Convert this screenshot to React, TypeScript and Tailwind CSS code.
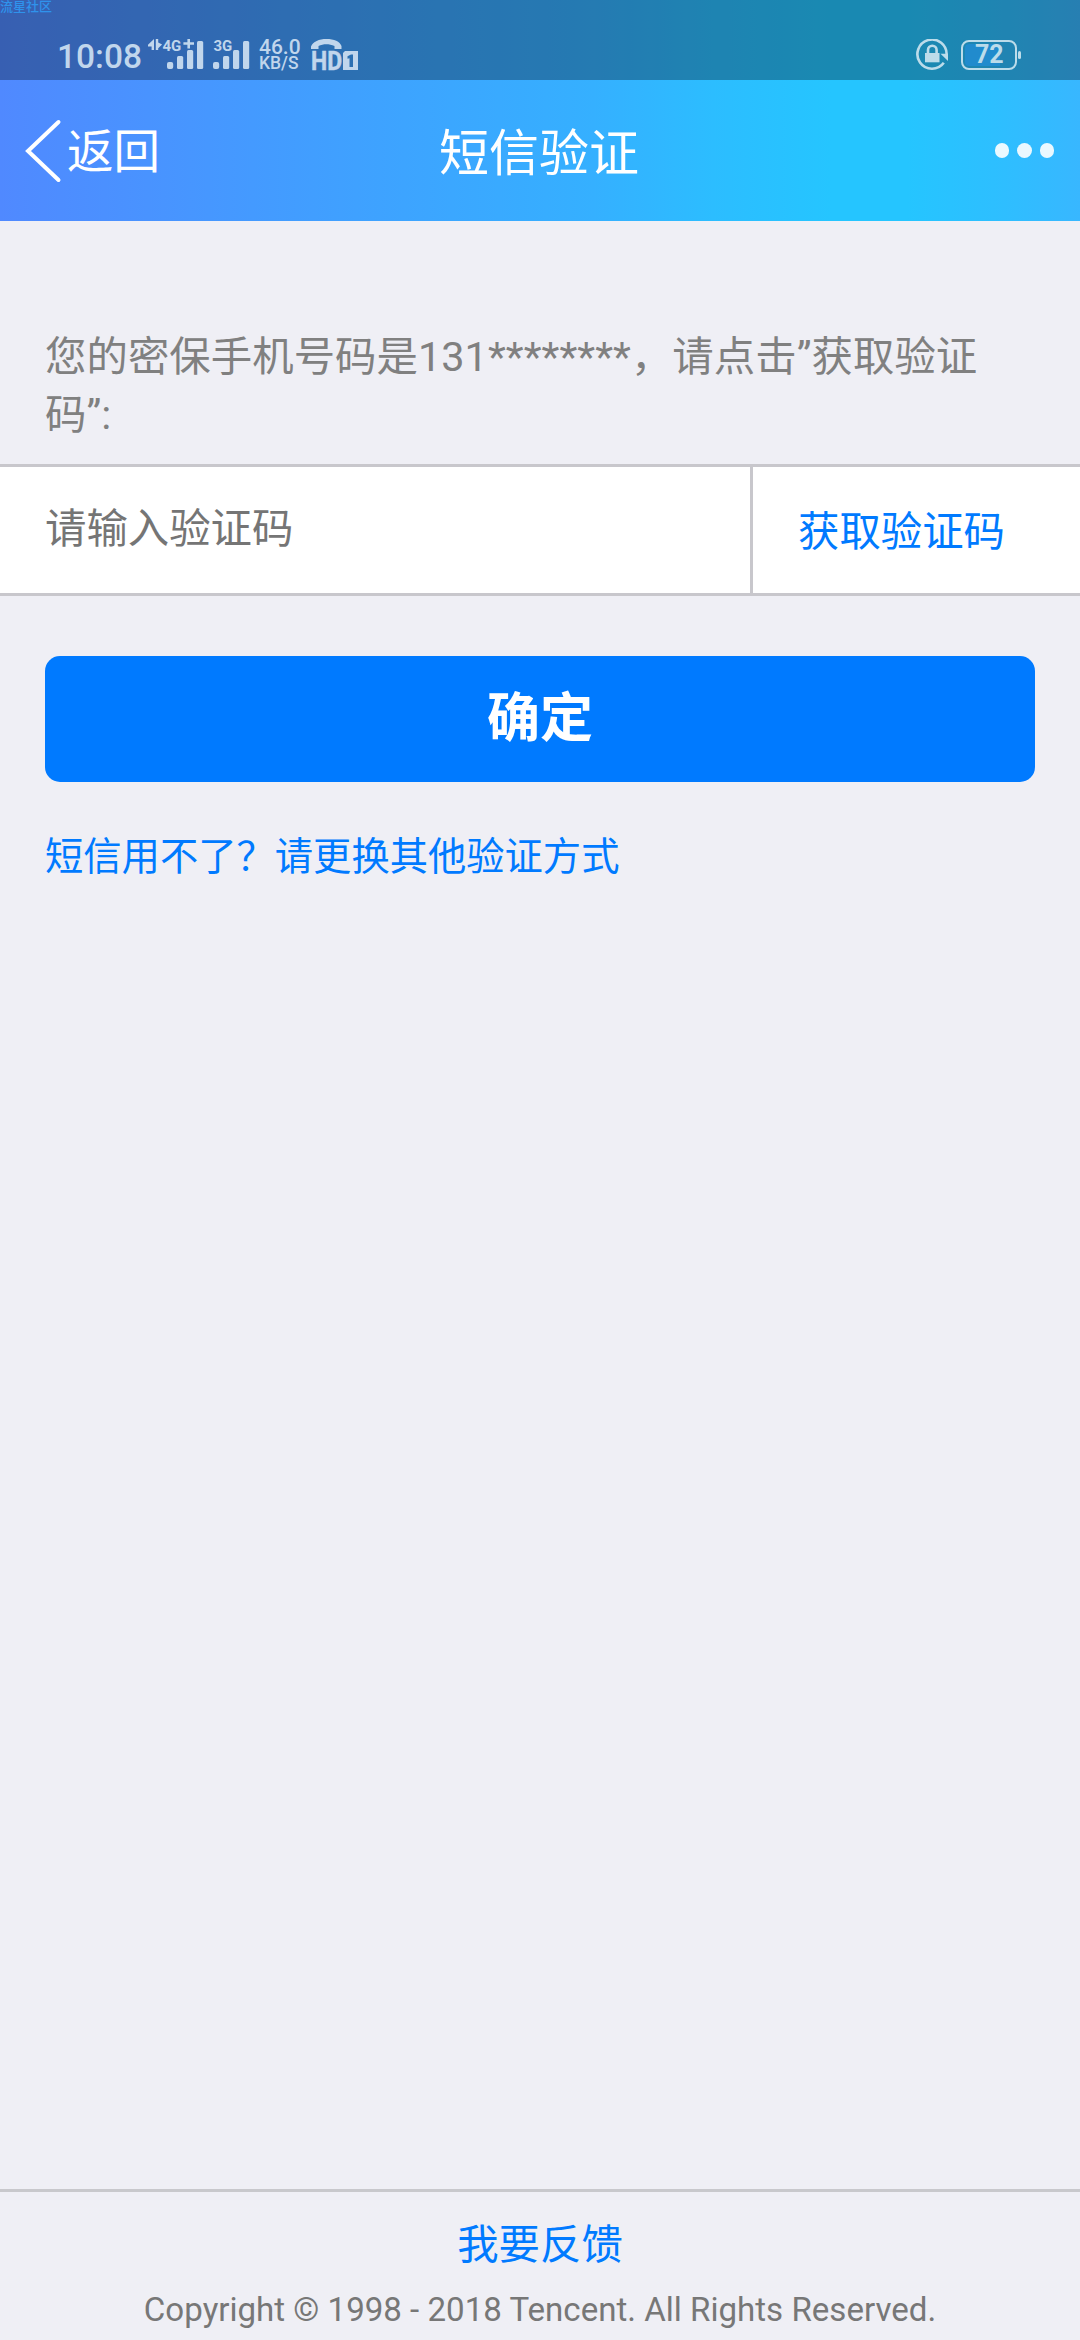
function SignalBars({ label, data }: { label: string; data?: boolean }) {
  return (
    <svg
      className={data ? "h-8 w-14 overflow-visible" : "h-8 w-9 overflow-visible"}
      viewBox={data ? "0 0 56 32" : "19 0 36 32"}
      fill="currentColor"
    >
      {data && (
        <>
          <path d="M6 0v11H3.600V7.400H0V5.800z" />
          <path d="M7.800 0v11h2.400V9.300l3.900-3.900-3.900-2V0z" />
        </>
      )}
      <text
        x={data ? 14.5 : 19.5}
        y="12"
        fontSize="15"
        fontWeight="700"
        fontFamily="Roboto, sans-serif"
      >
        {label}
      </text>
      {data && <path d="M39.400 0H42v3.300h4v2.500h-4V9.400h-2.600V5.800h-4V3.300h4z" />}
      <rect x="19" y="23" width="6.200" height="7" rx="2" />
      <rect x="29" y="17" width="6.200" height="13" rx="1.500" />
      <rect x="39" y="11" width="6.200" height="19" rx="1.500" />
      <rect x="49" y="2" width="6.200" height="28" rx="1.500" />
    </svg>
  );
}

function HdCallIcon() {
  return (
    <svg className="h-8 w-12 overflow-visible" viewBox="0 0 48 32" fill="currentColor">
      <path d="M0 10V7.500C2 2.500 8 0 15.500 0S29 2.500 30.500 7v3h-7V7C18 4.500 12.500 4.500 7.500 7v3z" />
      <text
        x="0"
        y="31"
        fontSize="25.500"
        fontWeight="700"
        fontFamily="Roboto, sans-serif"
        textLength="31"
        lengthAdjust="spacingAndGlyphs"
        stroke="currentColor"
        strokeWidth="0.500"
      >
        HD
      </text>
      <path
        fillRule="evenodd"
        d="M34 12h13v19H32V14zM36.500 17.200v2.600l2-.6V28H42V15.500h-2z"
      />
    </svg>
  );
}

function RotationLockIcon() {
  return (
    <svg className="size-8" viewBox="0 0 32 32" fill="none" stroke="currentColor">
      <path d="M27.800 23.800A14.600 14.600 0 1 1 30.600 16" strokeWidth="2.600" />
      <path d="M24.500 14.800h7.500V22z" fill="currentColor" stroke="none" />
      <rect x="9" y="14" width="14.500" height="9.300" fill="currentColor" stroke="none" />
      <path d="M12 14.500V11a4.300 4.300 0 0 1 8.600 0v3.500" strokeWidth="2.600" />
    </svg>
  );
}

function Battery({ level }: { level: number }) {
  return (
    <div className="flex items-center gap-px">
      <div className="flex h-[30px] w-14 items-center rounded-lg border-2 border-current p-0.5">
        <div
          className="flex h-[22px] items-center rounded-l bg-[#218bcd]"
          style={{ width: `${level}%` }}
        >
          <span className="pl-2.5 text-[25px]/6 font-bold">{level}</span>
        </div>
      </div>
      <div className="h-2 w-[3px] rounded-xs bg-current" />
    </div>
  );
}

function StatusBar() {
  return (
    <div className="relative flex h-20 items-start bg-black/30 pt-[39px] pr-[59px] pl-[57px] text-[#c1d6ec]">
      <span className="absolute top-0 left-0 text-[13px]/[13px] font-medium text-[#2f93ec]">
        流星社区
      </span>
      <span className="w-[91px] text-[33.500px]/[35px] font-medium">10:08</span>
      <SignalBars label="4G" data />
      <div className="ml-[9px]">
        <SignalBars label="3G" />
      </div>
      <div className="ml-2.5 w-[52px] font-medium">
        <div className="text-[21px]/[16px]">46.0</div>
        <div className="text-[17.500px]/[16px]">KB/S</div>
      </div>
      <HdCallIcon />
      <div className="ml-auto flex items-center gap-[13px] text-[#bcdcea]">
        <RotationLockIcon />
        <Battery level={72} />
      </div>
    </div>
  );
}

function NavBar() {
  return (
    <div className="grid h-[141px] grid-cols-3 items-center pr-[26px] pl-6 text-white">
      <div className="flex items-center">
        <svg className="h-16 w-10" viewBox="0 0 40 64" fill="none" stroke="currentColor">
          <path d="M34.500 3L4 32l30.500 29" strokeWidth="4" strokeLinecap="round" />
        </svg>
        <span className="pt-0.5 pl-[3px] text-[46.500px]/[60px]">返回</span>
      </div>
      <h1 className="pt-[6px] text-center text-[50px]/[64px] font-normal">短信验证</h1>
      <div className="flex justify-end gap-2">
        <i className="size-[14.500px] rounded-full bg-white/90" />
        <i className="size-[14.500px] rounded-full bg-white/90" />
        <i className="size-[14.500px] rounded-full bg-white/90" />
      </div>
    </div>
  );
}

export default function App() {
  return (
    <div className="flex h-[2340px] w-[1080px] flex-col bg-[#efeff5] font-[Roboto,'Noto_Sans_CJK_SC',sans-serif]">
      <header className="bg-[linear-gradient(90deg,#5089ff_0%,#3fa1ff_33%,#35b0ff_55%,#2cbdff_66%,#25c5ff_77%,#25c5ff_84%,#2dbfff_92%,#38b7ff_100%)]">
        <StatusBar />
        <NavBar />
      </header>

      <main className="flex-1">
        <p className="px-[45px] pt-[107px] pb-5 text-[41.400px]/[58px] tracking-[0.05px] text-[#808080]">
          您的密保手机号码是131********，请点击”获取验证码”:
        </p>
        <div className="flex h-[132px] border-y-[3px] border-[#c8c7cc] bg-white">
          <input
            className="w-[750px] px-[45px] pb-0.5 text-[41.400px] placeholder:text-[#757575] placeholder:opacity-100"
            placeholder="请输入验证码"
          />
          <button className="flex-1 border-l-[3px] border-[#c8c7cc] pt-[3px] pl-[45px] text-left text-[41.400px]/[58px] text-[#007aff]">
            获取验证码
          </button>
        </div>
        <div className="px-[45px]">
          <button className="mt-[60px] h-[126px] w-full rounded-[15px] bg-[#007aff] text-[53px]/[74px] font-bold text-white">
            确定
          </button>
          <a className="mt-12 block text-[38.300px]/[54px] text-[#007aff]">
            短信用不了？请更换其他验证方式
          </a>
        </div>
      </main>

      <footer className="h-[151px] border-t-[3px] border-[#c8c8cc] pt-6 text-center">
        <a className="block text-[41.400px]/[58px] text-[#007aff]">我要反馈</a>
        <p className="pt-3 text-[33.100px]/[47px] text-[#777]">
          Copyright © 1998 - 2018 Tencent. All Rights Reserved.
        </p>
      </footer>
    </div>
  );
}
